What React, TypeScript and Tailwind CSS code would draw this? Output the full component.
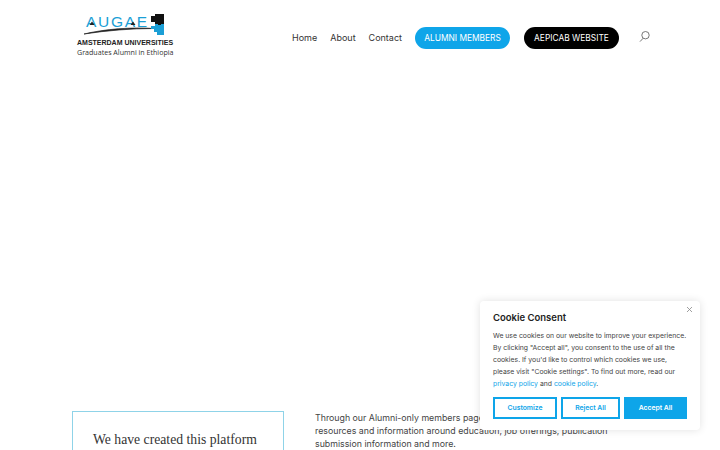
const sans = "font-['Inter','Liberation_Sans',sans-serif]";

function Logo() {
  return (
    <div className="w-[100px] ml-[5px] mb-[5px] flex flex-col items-start">
      <div className="relative h-[25px] w-[92px]">
        <div className="absolute left-[9px] top-[0.5px] font-['Liberation_Sans',sans-serif] text-[15.5px] leading-[15px] tracking-[1.7px] text-[#1b9fd6]">
          AUGAE
        </div>
        <svg className="absolute left-0 top-0" width="92" height="25" viewBox="0 0 92 25">
          <path d="M7 21 C28 16 54 14 77 15.5 C54 15.5 30 17.5 7 21Z" fill="#222" stroke="#222" strokeWidth="0.7" />
          <path d="M12.5 12l2.5-3.5 2.5 3.5zM53.5 12l2.5-3.5 2.5 3.5z" fill="#222" />
          <path d="M74 3h4v-2h9v10h-3v1h-3v-1h-3v-2h-4z" fill="#111" />
          <path d="M78 11h3v1h3v-1h3v11h-7v-3h-3v-3h-3v-3h4z" fill="#1b9fd6" />
        </svg>
      </div>
      <div className="font-['Liberation_Sans',sans-serif] font-bold text-[7px] leading-[9.5px] text-[#222] whitespace-nowrap">
        AMSTERDAM UNIVERSITIES
      </div>
      <div className="font-['Open_Sans',sans-serif] text-[7.1px] leading-[9.5px] text-[#333] whitespace-nowrap">
        Graduates Alumni in Ethiopia
      </div>
    </div>
  );
}

function Header() {
  return (
    <header className="h-[75px] flex items-center justify-between pl-[72px] pr-[70px]">
      <Logo />
      <nav className="flex items-center text-[9px] text-[#333] mt-[1px] whitespace-nowrap">
        <a className="mr-[13px]">Home</a>
        <a className="mr-[13px]">About</a>
        <a className="mr-[13px]">Contact</a>
        <a className="w-[95px] h-[22px] mr-[14px] rounded-full bg-[#0ea5e9] text-white text-[8.4px] flex items-center justify-center">
          ALUMNI MEMBERS
        </a>
        <a className="w-[95px] h-[22px] mr-[20px] rounded-full bg-black text-white text-[8.4px] flex items-center justify-center">
          AEPICAB WEBSITE
        </a>
        <svg className="mb-[3px]" width="11" height="11" viewBox="0 0 11 11" fill="none" stroke="#555" strokeWidth="0.8">
          <circle cx="6.5" cy="4.2" r="3.7" />
          <path d="M4.2 7.2 L1 10.6" />
        </svg>
      </nav>
    </header>
  );
}

function CookieConsent() {
  return (
    <div className="absolute left-[480px] top-[301px] w-[220px] h-[129px] rounded-[4px] bg-white shadow-[0_0_8px_rgba(0,0,0,0.12)] pl-[13px] pt-[11px]">
      <svg className="absolute right-[8px] top-[6px]" width="5" height="5" viewBox="0 0 5 5" stroke="#888" strokeWidth="0.8">
        <path d="M0 0L5 5M5 0L0 5" />
      </svg>
      <h2 className="text-[9.5px] leading-[12px] font-semibold text-[#222]">Cookie Consent</h2>
      <p className="mt-[6px] text-[6.85px] leading-[12px] text-[#444] whitespace-nowrap">
        We use cookies on our website to improve your experience.
        <br />
        By clicking "Accept all", you consent to the use of all the
        <br />
        cookies. If you'd like to control which cookies we use,
        <br />
        please visit "Cookie settings". To find out more, read our
        <br />
        <span className="text-[#0ea5e9]">privacy policy</span> and <span className="text-[#0ea5e9]">cookie policy</span>.
      </p>
      <div className="mt-[7px] flex gap-[4px] text-[6.8px] font-semibold">
        <button className="w-[64px] h-[22px] border-2 border-[#0ea5e9] text-[#0ea5e9]">Customize</button>
        <button className="w-[59px] h-[22px] border-2 border-[#0ea5e9] text-[#0ea5e9]">Reject All</button>
        <button className="w-[63px] h-[22px] bg-[#0ea5e9] text-white">Accept All</button>
      </div>
    </div>
  );
}

export default function App() {
  return (
    <div className={`relative h-[450px] w-[720px] overflow-hidden bg-white ${sans}`}>
      <Header />
      <section className="mt-[336px] flex pl-[72px]">
        <div className="w-[212px] h-[100px] border border-[#8fd3e8] pt-[18px] pl-[20px] shrink-0">
          <p className="font-['Liberation_Serif',serif] text-[13.7px] leading-[20px] text-[#333] whitespace-nowrap">
            We have created this platform
          </p>
        </div>
        <p className="ml-[31px] text-[8.8px] leading-[13px] text-[#444] whitespace-nowrap">
          Through our Alumni-only members page, you can find
          <br />
          resources and information around education, job offerings, publication
          <br />
          submission information and more.
        </p>
      </section>
      <CookieConsent />
    </div>
  );
}
